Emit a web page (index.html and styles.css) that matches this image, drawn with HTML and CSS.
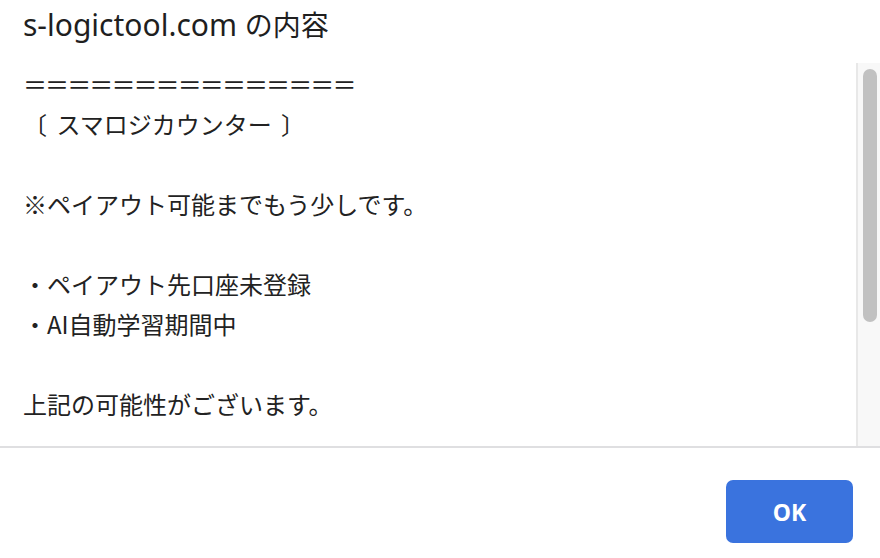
FILE: index.html
```html
<!DOCTYPE html>
<html lang="ja">
<head>
	<meta charset="UTF-8">
	<title>s-logictool.com の内容</title>
	<link rel="stylesheet" href="styles.css">
</head>
<body>
	<div class="dialog">
		<div class="dialog_head">
			<h1 class="title">s-logictool.com <span class="title_jp">の内容</span></h1>
		</div>
		<div class="dialog_body">
			<div class="message">
				<p class="rule">＝＝＝＝＝＝＝＝＝＝＝＝＝＝＝</p>
				<p class="name">〔 スマロジカウンター 〕</p>
				<p class="blank"></p>
				<p>※ペイアウト可能までもう少しです。</p>
				<p class="blank"></p>
				<p>・ペイアウト先口座未登録</p>
				<p>・AI自動学習期間中</p>
				<p class="blank"></p>
				<p>上記の可能性がございます。</p>
			</div>
			<div class="scrollbar">
				<span class="thumb"></span>
			</div>
		</div>
		<div class="dialog_foot">
			<button class="btn_ok">OK</button>
		</div>
	</div>
</body>
</html>
```

FILE: styles.css
```css
*{
	margin: 0;
	padding: 0;
	border: none;
	box-sizing: border-box;
}
body{
	background-color: #fff;
	font-family: "Noto Sans", "Noto Sans CJK JP", sans-serif;
	color: #222;
}
.dialog{
	width: 880px;
	height: 558px;
	display: flex;
	flex-direction: column;
}
.dialog_head{
	height: 63px;
	padding: 5px 0 0 23px;
}
.title{
	font-size: 30px;
	font-weight: normal;
	line-height: 40px;
	color: #1f1f1f;
}
.title_jp{
	font-size: 28px;
}
.dialog_body{
	height: 383px;
	display: flex;
}
.message{
	flex: 1;
	overflow: hidden;
	padding: 1px 0 0 23px;
	font-size: 24px;
	font-family: "Noto Sans CJK JP", sans-serif;
}
.message p{
	height: 40px;
	line-height: 40px;
	white-space: nowrap;
}
.message .rule{
	letter-spacing: -1.9px;
}
.message .name{
	word-spacing: 4px;
}
.scrollbar{
	width: 24px;
	border-left: 2px solid #e8e8e8;
	background-color: #f8f8f8;
	padding: 6px 3px 0 5px;
}
.thumb{
	display: block;
	width: 14px;
	height: 253px;
	border-radius: 7px;
	background-color: #c1c1c1;
}
.dialog_foot{
	flex: 1;
	border-top: 2px solid #dfdfe1;
	display: flex;
	justify-content: flex-end;
	align-items: flex-start;
	padding: 32px 27px 0 0;
}
.btn_ok{
	width: 127px;
	height: 63px;
	border-radius: 7px;
	background-color: #3a73de;
	color: #fff;
	font-family: "Noto Sans", sans-serif;
	font-size: 23px;
	font-weight: bold;
	cursor: pointer;
}
```
